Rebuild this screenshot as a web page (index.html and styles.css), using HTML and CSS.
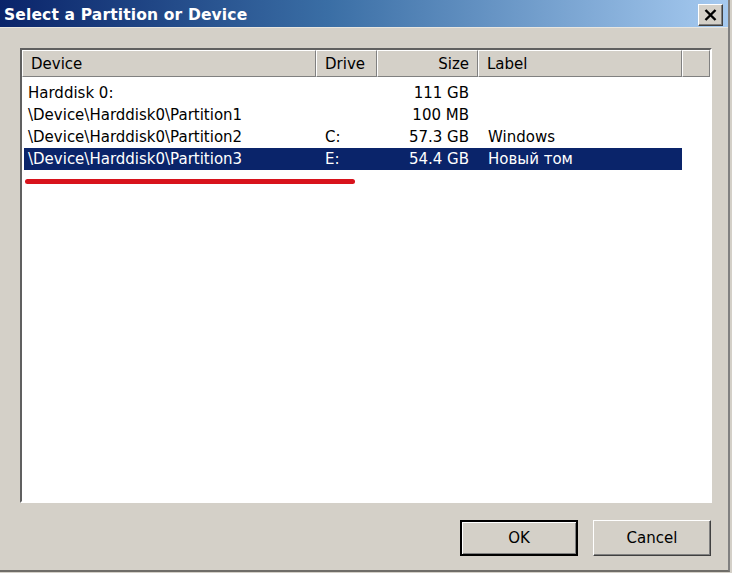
FILE: index.html
```html
<!DOCTYPE html>
<html lang="en">
<head>
  <meta charset="UTF-8" />
  <title>Select a Partition or Device</title>
  <link rel="stylesheet" href="styles.css">
</head>
<body>
  <div class="window">
    <div class="titlebar">
      <span class="title">Select a Partition or Device</span>
      <button class="btn-close">
        <svg width="13" height="12" viewBox="0 0 13 12"><path d="M1.5 1 L11.5 11 M11.5 1 L1.5 11" stroke="#000" stroke-width="2.4"/></svg>
      </button>
    </div>

    <div class="content">
      <div class="listbox">
        <div class="list-head">
          <div class="col col-device">Device</div>
          <div class="col col-drive">Drive</div>
          <div class="col col-size">Size</div>
          <div class="col col-label">Label</div>
          <div class="col col-rest"></div>
        </div>
        <div class="list-body">
          <div class="row">
            <div class="cell col-device">Harddisk 0:</div>
            <div class="cell col-drive"></div>
            <div class="cell col-size">111 GB</div>
            <div class="cell col-label"></div>
          </div>
          <div class="row">
            <div class="cell col-device">\Device\Harddisk0\Partition1</div>
            <div class="cell col-drive"></div>
            <div class="cell col-size">100 MB</div>
            <div class="cell col-label"></div>
          </div>
          <div class="row">
            <div class="cell col-device">\Device\Harddisk0\Partition2</div>
            <div class="cell col-drive">C:</div>
            <div class="cell col-size">57.3 GB</div>
            <div class="cell col-label">Windows</div>
          </div>
          <div class="row selected">
            <div class="cell col-device">\Device\Harddisk0\Partition3</div>
            <div class="cell col-drive">E:</div>
            <div class="cell col-size">54.4 GB</div>
            <div class="cell col-label">Новый том</div>
          </div>
          <div class="underline"></div>
        </div>
      </div>

      <div class="buttons">
        <button class="btn btn-default">OK</button>
        <button class="btn">Cancel</button>
      </div>
    </div>
  </div>
</body>
</html>
```

FILE: styles.css
```css
body {
  margin: 0;
  background-color: #d4d0c8;
  font-family: "DejaVu Sans", Verdana, sans-serif;
  font-size: 15px;
  color: #000;
}

.window {
  width: 728px;
  height: 570px;
  background-color: #d4d0c8;
  border-right: 2px solid #808080;
  border-bottom: 2px solid #6f6d68;
  display: flex;
  flex-direction: column;
}

.titlebar {
  height: 28px;
  box-sizing: border-box;
  background: linear-gradient(to right, #0a246a 0%, #3a6ea5 45%, #a6caf0 100%);
  display: flex;
  align-items: center;
  justify-content: space-between;
  padding: 2px 5px 0 4px;
  border-bottom: 1px solid #e8e6e0;
}

.title {
  color: #fff;
  font-weight: bold;
  font-size: 15.5px;
  letter-spacing: 0.15px;
}

.btn-close {
  width: 25px;
  height: 22px;
  padding: 0;
  background-color: #d4d0c8;
  border: 1px solid;
  border-color: #fff #404040 #404040 #fff;
  box-shadow: inset -1px -1px 0 #808080;
  display: flex;
  align-items: center;
  justify-content: center;
}

.content {
  flex: 1;
  padding: 20px 0 0 20px;
}

.listbox {
  width: 688px;
  height: 451px;
  background-color: #fff;
  border: 2px solid;
  border-color: #606060 #fff #fff #606060;
  box-shadow: 1px 1px 0 #d4d0c8;
}

.list-head {
  display: flex;
  height: 27px;
}

.list-head .col {
  background-color: #d4d0c8;
  border: 1px solid;
  border-color: #fff #808080 #808080 #fff;
  padding: 1px 8px 0;
  line-height: 24px;
  box-sizing: border-box;
}

.col-device { width: 294px; }
.col-drive { width: 61px; }
.col-size { width: 101px; text-align: right; }
.col-label { width: 204px; }
.col-rest { width: 28px; }

.list-body {
  padding: 5px 0 0 2px;
}

.row {
  display: flex;
  height: 22px;
  line-height: 22px;
}

.row .cell {
  padding: 0 8px 0 4px;
  white-space: nowrap;
  box-sizing: border-box;
}

.row .col-device { width: 292px; }
.row .col-drive { padding-left: 9px; }
.row .col-size { padding-right: 9px; }
.row .col-label { padding-left: 10px; }

.row.selected {
  width: 658px;
  background-color: #0a246a;
  color: #fff;
}

.underline {
  width: 330px;
  height: 5px;
  margin: 9px 0 0 1px;
  border-radius: 3px;
  background-color: #d8131c;
}

.buttons {
  display: flex;
  justify-content: flex-end;
  gap: 15px;
  padding: 17px 17px 0 0;
}

.btn {
  width: 118px;
  height: 36px;
  font-family: "DejaVu Sans", Verdana, sans-serif;
  font-size: 15px;
  background-color: #d4d0c8;
  border: 1px solid;
  border-color: #fff #404040 #404040 #fff;
  box-shadow: inset -1px -1px 0 #808080;
  color: #000;
}

.btn-default {
  border: 2px solid #000;
  box-shadow: inset 1px 1px 0 #fff, inset -1px -1px 0 #808080;
}
```
